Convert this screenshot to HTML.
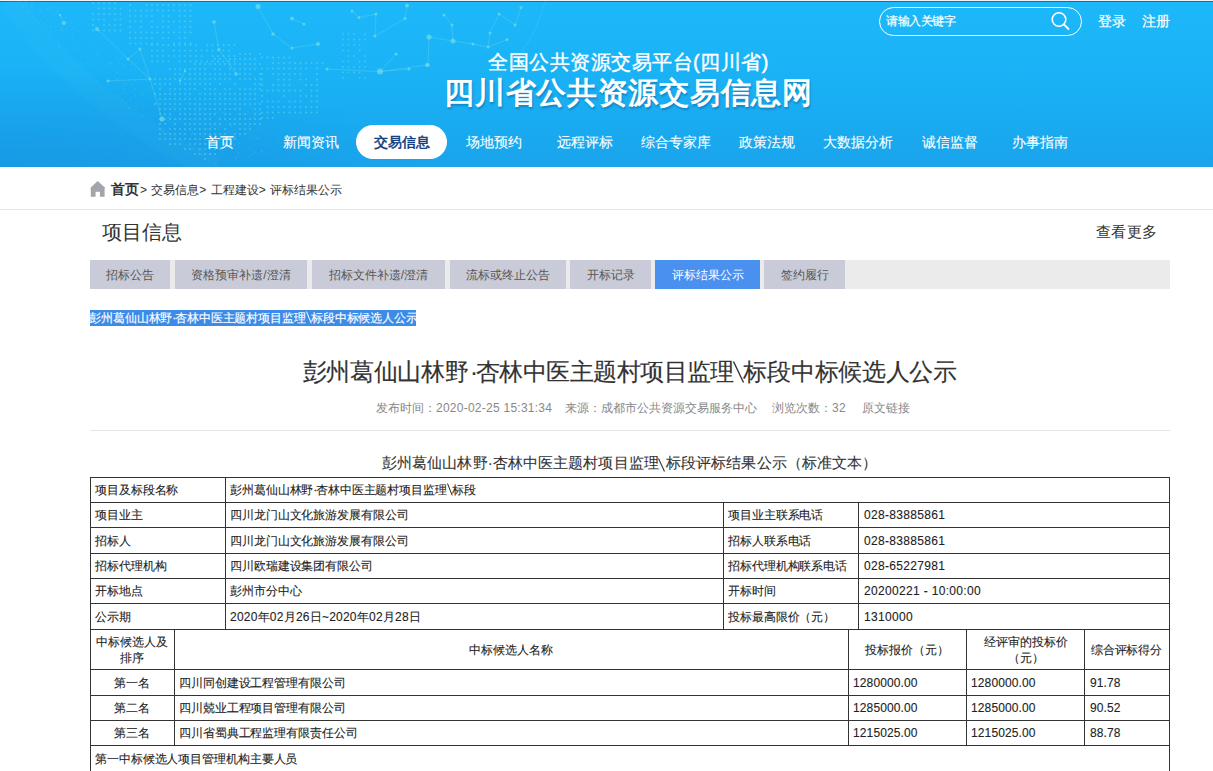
<!DOCTYPE html>
<html><head><meta charset="utf-8">
<style>
*{margin:0;padding:0;box-sizing:border-box}
html,body{width:1213px;height:771px;overflow:hidden;background:#fff;font-family:"Liberation Sans",sans-serif;color:#333}
.hd{position:absolute;left:0;top:0;width:1213px;height:167px;background:linear-gradient(180deg,#1db8fa 0%,#1ab3f6 40%,#19a4ec 100%);border-top:1px solid #eef2f6;overflow:hidden}
.hd:before{content:"";position:absolute;left:0;top:0;right:0;height:1px;background:#5a5a5a}
.abs{position:absolute;white-space:nowrap}
.search{left:879px;top:6px;width:203px;height:29px;border:1px solid #fff;border-radius:15px}
.search span{position:absolute;left:6px;top:5px;font-size:12px;color:#fff;letter-spacing:-0.5px;-webkit-text-stroke:0.2px #fff}
.t1{left:22px;width:1213px;text-align:center;top:49px;font-size:20px;letter-spacing:0.5px;color:#fff;line-height:24px;-webkit-text-stroke:0.4px #fff}
.t2{left:22px;width:1213px;text-align:center;top:74px;font-size:30px;letter-spacing:0.7px;font-weight:bold;color:#fff;line-height:36px;text-shadow:1px 2px 2px rgba(0,60,120,.35)}
.nav a{position:absolute;top:131.5px;font-size:14px;color:#fff;text-decoration:none;line-height:18px;-webkit-text-stroke:0.1px #fff}
.pill{left:356px;top:124px;width:91px;height:34px;background:#fff;border-radius:17px}
.bc{top:209px;left:0;width:1213px;height:1px;background:#e3e3e3}
.meta{top:400px;font-size:12px;color:#888;line-height:16px}
.dg{letter-spacing:0.25px}
.tabs{left:90px;top:260px;width:1080px;height:29px;background:#ebebeb}
.tab{position:absolute;top:0;height:29px;background:#c9ccd8;color:#555;font-size:12px;line-height:30px;text-align:center}
.tab.on{background:#4a90ef;color:#fff}
table{position:absolute;border-collapse:collapse;table-layout:fixed;font-size:12px;color:#333}
.ln{position:absolute;background:#333}
.md{letter-spacing:-1.4px}
.c.dg2{letter-spacing:0.33px}
.bs{display:inline-block;width:5px;height:1px;position:relative}
.bs svg{position:absolute;left:0;top:-10px}
.c{position:absolute;white-space:nowrap;font-size:12px;letter-spacing:-0.1px;color:#222;-webkit-text-stroke:0.1px #222}
.c2{position:absolute;text-align:center;font-size:12px;color:#222;-webkit-text-stroke:0.1px #222;line-height:16px}
</style></head><body>
<div class="hd">
<!--BG-->
<svg class="bgsvg" width="1213" height="167" viewBox="0 0 1213 167" style="position:absolute;left:0;top:0">
<defs><radialGradient id="dk" cx="0" cy="1" r="0.6"><stop offset="0" stop-color="#1592de" stop-opacity="0.55"/><stop offset="1" stop-color="#1592de" stop-opacity="0"/></radialGradient>
<radialGradient id="lt" cx="0.3" cy="0.2" r="0.5"><stop offset="0" stop-color="#40c8ff" stop-opacity="0.25"/><stop offset="1" stop-color="#40c8ff" stop-opacity="0"/></radialGradient></defs>

<rect x="0" y="0" width="700" height="167" fill="url(#dk)"/>
<path d="M10 0 Q 90 110 215 167" fill="none" stroke="#7fe0f0" stroke-opacity="0.05" stroke-width="22"/>
<path d="M545 0 Q 530 60 470 100" fill="none" stroke="#8fe6f2" stroke-opacity="0.15" stroke-width="1"/>
<g fill="#6edbe6"><circle cx="93.0" cy="2.0" r="1.0" fill-opacity="0.5"/>
<circle cx="98.5" cy="2.0" r="1.0" fill-opacity="0.5"/>
<circle cx="104.0" cy="2.0" r="1.0" fill-opacity="0.5"/>
<circle cx="109.5" cy="2.0" r="1.0" fill-opacity="0.5"/>
<circle cx="115.0" cy="2.0" r="1.0" fill-opacity="0.5"/>
<circle cx="98.5" cy="7.5" r="1.0" fill-opacity="0.5"/>
<circle cx="104.0" cy="7.5" r="1.0" fill-opacity="0.5"/>
<circle cx="109.5" cy="7.5" r="1.0" fill-opacity="0.5"/>
<circle cx="115.0" cy="7.5" r="1.0" fill-opacity="0.5"/>
<circle cx="120.5" cy="7.5" r="1.0" fill-opacity="0.5"/>
<circle cx="93.0" cy="13.0" r="1.0" fill-opacity="0.5"/>
<circle cx="98.5" cy="13.0" r="1.0" fill-opacity="0.5"/>
<circle cx="104.0" cy="13.0" r="1.0" fill-opacity="0.5"/>
<circle cx="109.5" cy="13.0" r="1.0" fill-opacity="0.5"/>
<circle cx="115.0" cy="13.0" r="1.0" fill-opacity="0.5"/>
<circle cx="120.5" cy="13.0" r="1.0" fill-opacity="0.5"/>
<circle cx="93.0" cy="18.5" r="1.0" fill-opacity="0.5"/>
<circle cx="98.5" cy="18.5" r="1.0" fill-opacity="0.5"/>
<circle cx="104.0" cy="18.5" r="1.0" fill-opacity="0.5"/>
<circle cx="115.0" cy="18.5" r="1.0" fill-opacity="0.5"/>
<circle cx="120.5" cy="18.5" r="1.0" fill-opacity="0.5"/>
<circle cx="93.0" cy="24.0" r="1.0" fill-opacity="0.5"/>
<circle cx="104.0" cy="24.0" r="1.0" fill-opacity="0.5"/>
<circle cx="109.5" cy="24.0" r="1.0" fill-opacity="0.5"/>
<circle cx="115.0" cy="24.0" r="1.0" fill-opacity="0.5"/>
<circle cx="120.5" cy="24.0" r="1.0" fill-opacity="0.5"/>
<circle cx="93.0" cy="29.5" r="1.0" fill-opacity="0.5"/>
<circle cx="98.5" cy="29.5" r="1.0" fill-opacity="0.5"/>
<circle cx="104.0" cy="29.5" r="1.0" fill-opacity="0.5"/>
<circle cx="109.5" cy="29.5" r="1.0" fill-opacity="0.5"/>
<circle cx="115.0" cy="29.5" r="1.0" fill-opacity="0.5"/>
<circle cx="120.5" cy="29.5" r="1.0" fill-opacity="0.5"/>
<circle cx="130.0" cy="4.0" r="1.0" fill-opacity="0.5"/>
<circle cx="146.5" cy="4.0" r="1.0" fill-opacity="0.5"/>
<circle cx="152.0" cy="4.0" r="1.0" fill-opacity="0.5"/>
<circle cx="157.5" cy="4.0" r="1.0" fill-opacity="0.5"/>
<circle cx="163.0" cy="4.0" r="1.0" fill-opacity="0.5"/>
<circle cx="168.5" cy="4.0" r="1.0" fill-opacity="0.5"/>
<circle cx="174.0" cy="4.0" r="1.0" fill-opacity="0.5"/>
<circle cx="179.5" cy="4.0" r="1.0" fill-opacity="0.5"/>
<circle cx="185.0" cy="4.0" r="1.0" fill-opacity="0.5"/>
<circle cx="190.5" cy="4.0" r="1.0" fill-opacity="0.5"/>
<circle cx="130.0" cy="9.5" r="1.0" fill-opacity="0.5"/>
<circle cx="135.5" cy="9.5" r="1.0" fill-opacity="0.5"/>
<circle cx="141.0" cy="9.5" r="1.0" fill-opacity="0.5"/>
<circle cx="146.5" cy="9.5" r="1.0" fill-opacity="0.5"/>
<circle cx="152.0" cy="9.5" r="1.0" fill-opacity="0.5"/>
<circle cx="157.5" cy="9.5" r="1.0" fill-opacity="0.5"/>
<circle cx="163.0" cy="9.5" r="1.0" fill-opacity="0.5"/>
<circle cx="168.5" cy="9.5" r="1.0" fill-opacity="0.5"/>
<circle cx="174.0" cy="9.5" r="1.0" fill-opacity="0.5"/>
<circle cx="179.5" cy="9.5" r="1.0" fill-opacity="0.5"/>
<circle cx="185.0" cy="9.5" r="1.0" fill-opacity="0.5"/>
<circle cx="190.5" cy="9.5" r="1.0" fill-opacity="0.5"/>
<circle cx="130.0" cy="15.0" r="1.0" fill-opacity="0.5"/>
<circle cx="135.5" cy="15.0" r="1.0" fill-opacity="0.5"/>
<circle cx="141.0" cy="15.0" r="1.0" fill-opacity="0.5"/>
<circle cx="146.5" cy="15.0" r="1.0" fill-opacity="0.5"/>
<circle cx="152.0" cy="15.0" r="1.0" fill-opacity="0.5"/>
<circle cx="163.0" cy="15.0" r="1.0" fill-opacity="0.5"/>
<circle cx="168.5" cy="15.0" r="1.0" fill-opacity="0.5"/>
<circle cx="179.5" cy="15.0" r="1.0" fill-opacity="0.5"/>
<circle cx="185.0" cy="15.0" r="1.0" fill-opacity="0.5"/>
<circle cx="190.5" cy="15.0" r="1.0" fill-opacity="0.5"/>
<circle cx="130.0" cy="20.5" r="1.0" fill-opacity="0.5"/>
<circle cx="135.5" cy="20.5" r="1.0" fill-opacity="0.5"/>
<circle cx="141.0" cy="20.5" r="1.0" fill-opacity="0.5"/>
<circle cx="152.0" cy="20.5" r="1.0" fill-opacity="0.5"/>
<circle cx="163.0" cy="20.5" r="1.0" fill-opacity="0.5"/>
<circle cx="168.5" cy="20.5" r="1.0" fill-opacity="0.5"/>
<circle cx="174.0" cy="20.5" r="1.0" fill-opacity="0.5"/>
<circle cx="179.5" cy="20.5" r="1.0" fill-opacity="0.5"/>
<circle cx="185.0" cy="20.5" r="1.0" fill-opacity="0.5"/>
<circle cx="190.5" cy="20.5" r="1.0" fill-opacity="0.5"/>
<circle cx="130.0" cy="26.0" r="1.0" fill-opacity="0.5"/>
<circle cx="141.0" cy="26.0" r="1.0" fill-opacity="0.5"/>
<circle cx="152.0" cy="26.0" r="1.0" fill-opacity="0.5"/>
<circle cx="157.5" cy="26.0" r="1.0" fill-opacity="0.5"/>
<circle cx="163.0" cy="26.0" r="1.0" fill-opacity="0.5"/>
<circle cx="168.5" cy="26.0" r="1.0" fill-opacity="0.5"/>
<circle cx="179.5" cy="26.0" r="1.0" fill-opacity="0.5"/>
<circle cx="185.0" cy="26.0" r="1.0" fill-opacity="0.5"/>
<circle cx="190.5" cy="26.0" r="1.0" fill-opacity="0.5"/>
<circle cx="130.0" cy="31.5" r="1.0" fill-opacity="0.5"/>
<circle cx="135.5" cy="31.5" r="1.0" fill-opacity="0.5"/>
<circle cx="141.0" cy="31.5" r="1.0" fill-opacity="0.5"/>
<circle cx="146.5" cy="31.5" r="1.0" fill-opacity="0.5"/>
<circle cx="152.0" cy="31.5" r="1.0" fill-opacity="0.5"/>
<circle cx="157.5" cy="31.5" r="1.0" fill-opacity="0.5"/>
<circle cx="163.0" cy="31.5" r="1.0" fill-opacity="0.5"/>
<circle cx="168.5" cy="31.5" r="1.0" fill-opacity="0.5"/>
<circle cx="174.0" cy="31.5" r="1.0" fill-opacity="0.5"/>
<circle cx="179.5" cy="31.5" r="1.0" fill-opacity="0.5"/>
<circle cx="185.0" cy="31.5" r="1.0" fill-opacity="0.5"/>
<circle cx="190.5" cy="31.5" r="1.0" fill-opacity="0.5"/>
<circle cx="130.0" cy="37.0" r="1.0" fill-opacity="0.5"/>
<circle cx="135.5" cy="37.0" r="1.0" fill-opacity="0.5"/>
<circle cx="141.0" cy="37.0" r="1.0" fill-opacity="0.5"/>
<circle cx="146.5" cy="37.0" r="1.0" fill-opacity="0.5"/>
<circle cx="152.0" cy="37.0" r="1.0" fill-opacity="0.5"/>
<circle cx="163.0" cy="37.0" r="1.0" fill-opacity="0.5"/>
<circle cx="168.5" cy="37.0" r="1.0" fill-opacity="0.5"/>
<circle cx="179.5" cy="37.0" r="1.0" fill-opacity="0.5"/>
<circle cx="185.0" cy="37.0" r="1.0" fill-opacity="0.5"/>
<circle cx="130.0" cy="42.5" r="1.0" fill-opacity="0.5"/>
<circle cx="135.5" cy="42.5" r="1.0" fill-opacity="0.5"/>
<circle cx="141.0" cy="42.5" r="1.0" fill-opacity="0.5"/>
<circle cx="146.5" cy="42.5" r="1.0" fill-opacity="0.5"/>
<circle cx="152.0" cy="42.5" r="1.0" fill-opacity="0.5"/>
<circle cx="157.5" cy="42.5" r="1.0" fill-opacity="0.5"/>
<circle cx="174.0" cy="42.5" r="1.0" fill-opacity="0.5"/>
<circle cx="179.5" cy="42.5" r="1.0" fill-opacity="0.5"/>
<circle cx="185.0" cy="42.5" r="1.0" fill-opacity="0.5"/>
<circle cx="190.5" cy="42.5" r="1.0" fill-opacity="0.5"/>
<circle cx="152.0" cy="44.0" r="1.0" fill-opacity="0.5"/>
<circle cx="157.5" cy="44.0" r="1.0" fill-opacity="0.5"/>
<circle cx="163.0" cy="44.0" r="1.0" fill-opacity="0.5"/>
<circle cx="168.5" cy="44.0" r="1.0" fill-opacity="0.5"/>
<circle cx="174.0" cy="44.0" r="1.0" fill-opacity="0.5"/>
<circle cx="179.5" cy="44.0" r="1.0" fill-opacity="0.5"/>
<circle cx="185.0" cy="44.0" r="1.0" fill-opacity="0.5"/>
<circle cx="190.5" cy="44.0" r="1.0" fill-opacity="0.5"/>
<circle cx="196.0" cy="44.0" r="1.0" fill-opacity="0.5"/>
<circle cx="207.0" cy="44.0" r="1.0" fill-opacity="0.5"/>
<circle cx="212.5" cy="44.0" r="1.0" fill-opacity="0.5"/>
<circle cx="218.0" cy="44.0" r="1.0" fill-opacity="0.5"/>
<circle cx="223.5" cy="44.0" r="1.0" fill-opacity="0.5"/>
<circle cx="229.0" cy="44.0" r="1.0" fill-opacity="0.5"/>
<circle cx="234.5" cy="44.0" r="1.0" fill-opacity="0.5"/>
<circle cx="152.0" cy="49.5" r="1.0" fill-opacity="0.5"/>
<circle cx="157.5" cy="49.5" r="1.0" fill-opacity="0.5"/>
<circle cx="163.0" cy="49.5" r="1.0" fill-opacity="0.5"/>
<circle cx="174.0" cy="49.5" r="1.0" fill-opacity="0.5"/>
<circle cx="179.5" cy="49.5" r="1.0" fill-opacity="0.5"/>
<circle cx="185.0" cy="49.5" r="1.0" fill-opacity="0.5"/>
<circle cx="190.5" cy="49.5" r="1.0" fill-opacity="0.5"/>
<circle cx="196.0" cy="49.5" r="1.0" fill-opacity="0.5"/>
<circle cx="201.5" cy="49.5" r="1.0" fill-opacity="0.5"/>
<circle cx="207.0" cy="49.5" r="1.0" fill-opacity="0.5"/>
<circle cx="212.5" cy="49.5" r="1.0" fill-opacity="0.5"/>
<circle cx="218.0" cy="49.5" r="1.0" fill-opacity="0.5"/>
<circle cx="223.5" cy="49.5" r="1.0" fill-opacity="0.5"/>
<circle cx="229.0" cy="49.5" r="1.0" fill-opacity="0.5"/>
<circle cx="152.0" cy="55.0" r="1.0" fill-opacity="0.5"/>
<circle cx="157.5" cy="55.0" r="1.0" fill-opacity="0.5"/>
<circle cx="163.0" cy="55.0" r="1.0" fill-opacity="0.5"/>
<circle cx="168.5" cy="55.0" r="1.0" fill-opacity="0.5"/>
<circle cx="174.0" cy="55.0" r="1.0" fill-opacity="0.5"/>
<circle cx="179.5" cy="55.0" r="1.0" fill-opacity="0.5"/>
<circle cx="185.0" cy="55.0" r="1.0" fill-opacity="0.5"/>
<circle cx="190.5" cy="55.0" r="1.0" fill-opacity="0.5"/>
<circle cx="196.0" cy="55.0" r="1.0" fill-opacity="0.5"/>
<circle cx="201.5" cy="55.0" r="1.0" fill-opacity="0.5"/>
<circle cx="212.5" cy="55.0" r="1.0" fill-opacity="0.5"/>
<circle cx="218.0" cy="55.0" r="1.0" fill-opacity="0.5"/>
<circle cx="223.5" cy="55.0" r="1.0" fill-opacity="0.5"/>
<circle cx="229.0" cy="55.0" r="1.0" fill-opacity="0.5"/>
<circle cx="234.5" cy="55.0" r="1.0" fill-opacity="0.5"/>
<circle cx="152.0" cy="60.5" r="1.0" fill-opacity="0.5"/>
<circle cx="157.5" cy="60.5" r="1.0" fill-opacity="0.5"/>
<circle cx="163.0" cy="60.5" r="1.0" fill-opacity="0.5"/>
<circle cx="168.5" cy="60.5" r="1.0" fill-opacity="0.5"/>
<circle cx="179.5" cy="60.5" r="1.0" fill-opacity="0.5"/>
<circle cx="185.0" cy="60.5" r="1.0" fill-opacity="0.5"/>
<circle cx="190.5" cy="60.5" r="1.0" fill-opacity="0.5"/>
<circle cx="196.0" cy="60.5" r="1.0" fill-opacity="0.5"/>
<circle cx="201.5" cy="60.5" r="1.0" fill-opacity="0.5"/>
<circle cx="207.0" cy="60.5" r="1.0" fill-opacity="0.5"/>
<circle cx="212.5" cy="60.5" r="1.0" fill-opacity="0.5"/>
<circle cx="218.0" cy="60.5" r="1.0" fill-opacity="0.5"/>
<circle cx="223.5" cy="60.5" r="1.0" fill-opacity="0.5"/>
<circle cx="229.0" cy="60.5" r="1.0" fill-opacity="0.5"/>
<circle cx="234.5" cy="60.5" r="1.0" fill-opacity="0.5"/>
<circle cx="240.0" cy="53.0" r="1.0" fill-opacity="0.5"/>
<circle cx="245.0" cy="53.0" r="1.0" fill-opacity="0.5"/>
<circle cx="250.0" cy="53.0" r="1.0" fill-opacity="0.5"/>
<circle cx="260.0" cy="53.0" r="1.0" fill-opacity="0.5"/>
<circle cx="215.0" cy="58.0" r="1.0" fill-opacity="0.5"/>
<circle cx="220.0" cy="58.0" r="1.0" fill-opacity="0.5"/>
<circle cx="230.0" cy="58.0" r="1.0" fill-opacity="0.5"/>
<circle cx="235.0" cy="58.0" r="1.0" fill-opacity="0.5"/>
<circle cx="240.0" cy="58.0" r="1.0" fill-opacity="0.5"/>
<circle cx="245.0" cy="58.0" r="1.0" fill-opacity="0.5"/>
<circle cx="250.0" cy="58.0" r="1.0" fill-opacity="0.5"/>
<circle cx="255.0" cy="58.0" r="1.0" fill-opacity="0.5"/>
<circle cx="195.0" cy="63.0" r="1.0" fill-opacity="0.5"/>
<circle cx="200.0" cy="63.0" r="1.0" fill-opacity="0.5"/>
<circle cx="205.0" cy="63.0" r="1.0" fill-opacity="0.5"/>
<circle cx="210.0" cy="63.0" r="1.0" fill-opacity="0.5"/>
<circle cx="215.0" cy="63.0" r="1.0" fill-opacity="0.5"/>
<circle cx="220.0" cy="63.0" r="1.0" fill-opacity="0.5"/>
<circle cx="225.0" cy="63.0" r="1.0" fill-opacity="0.5"/>
<circle cx="230.0" cy="63.0" r="1.0" fill-opacity="0.5"/>
<circle cx="235.0" cy="63.0" r="1.0" fill-opacity="0.5"/>
<circle cx="240.0" cy="63.0" r="1.0" fill-opacity="0.5"/>
<circle cx="245.0" cy="63.0" r="1.0" fill-opacity="0.5"/>
<circle cx="250.0" cy="63.0" r="1.0" fill-opacity="0.5"/>
<circle cx="255.0" cy="63.0" r="1.0" fill-opacity="0.5"/>
<circle cx="260.0" cy="63.0" r="1.0" fill-opacity="0.5"/>
<circle cx="170.0" cy="68.0" r="1.0" fill-opacity="0.5"/>
<circle cx="175.0" cy="68.0" r="1.0" fill-opacity="0.5"/>
<circle cx="180.0" cy="68.0" r="1.0" fill-opacity="0.5"/>
<circle cx="185.0" cy="68.0" r="1.0" fill-opacity="0.5"/>
<circle cx="190.0" cy="68.0" r="1.0" fill-opacity="0.5"/>
<circle cx="195.0" cy="68.0" r="1.0" fill-opacity="0.5"/>
<circle cx="200.0" cy="68.0" r="1.0" fill-opacity="0.5"/>
<circle cx="205.0" cy="68.0" r="1.0" fill-opacity="0.5"/>
<circle cx="215.0" cy="68.0" r="1.0" fill-opacity="0.5"/>
<circle cx="220.0" cy="68.0" r="1.0" fill-opacity="0.5"/>
<circle cx="230.0" cy="68.0" r="1.0" fill-opacity="0.5"/>
<circle cx="235.0" cy="68.0" r="1.0" fill-opacity="0.5"/>
<circle cx="240.0" cy="68.0" r="1.0" fill-opacity="0.5"/>
<circle cx="245.0" cy="68.0" r="1.0" fill-opacity="0.5"/>
<circle cx="250.0" cy="68.0" r="1.0" fill-opacity="0.5"/>
<circle cx="255.0" cy="68.0" r="1.0" fill-opacity="0.5"/>
<circle cx="175.0" cy="73.0" r="1.0" fill-opacity="0.5"/>
<circle cx="180.0" cy="73.0" r="1.0" fill-opacity="0.5"/>
<circle cx="190.0" cy="73.0" r="1.0" fill-opacity="0.5"/>
<circle cx="195.0" cy="73.0" r="1.0" fill-opacity="0.5"/>
<circle cx="200.0" cy="73.0" r="1.0" fill-opacity="0.5"/>
<circle cx="205.0" cy="73.0" r="1.0" fill-opacity="0.5"/>
<circle cx="210.0" cy="73.0" r="1.0" fill-opacity="0.5"/>
<circle cx="215.0" cy="73.0" r="1.0" fill-opacity="0.5"/>
<circle cx="220.0" cy="73.0" r="1.0" fill-opacity="0.5"/>
<circle cx="225.0" cy="73.0" r="1.0" fill-opacity="0.5"/>
<circle cx="230.0" cy="73.0" r="1.0" fill-opacity="0.5"/>
<circle cx="240.0" cy="73.0" r="1.0" fill-opacity="0.5"/>
<circle cx="245.0" cy="73.0" r="1.0" fill-opacity="0.5"/>
<circle cx="250.0" cy="73.0" r="1.0" fill-opacity="0.5"/>
<circle cx="260.0" cy="73.0" r="1.0" fill-opacity="0.5"/>
<circle cx="155.0" cy="78.0" r="1.0" fill-opacity="0.5"/>
<circle cx="160.0" cy="78.0" r="1.0" fill-opacity="0.5"/>
<circle cx="165.0" cy="78.0" r="1.0" fill-opacity="0.5"/>
<circle cx="170.0" cy="78.0" r="1.0" fill-opacity="0.5"/>
<circle cx="175.0" cy="78.0" r="1.0" fill-opacity="0.5"/>
<circle cx="180.0" cy="78.0" r="1.0" fill-opacity="0.5"/>
<circle cx="185.0" cy="78.0" r="1.0" fill-opacity="0.5"/>
<circle cx="190.0" cy="78.0" r="1.0" fill-opacity="0.5"/>
<circle cx="195.0" cy="78.0" r="1.0" fill-opacity="0.5"/>
<circle cx="200.0" cy="78.0" r="1.0" fill-opacity="0.5"/>
<circle cx="205.0" cy="78.0" r="1.0" fill-opacity="0.5"/>
<circle cx="210.0" cy="78.0" r="1.0" fill-opacity="0.5"/>
<circle cx="215.0" cy="78.0" r="1.0" fill-opacity="0.5"/>
<circle cx="220.0" cy="78.0" r="1.0" fill-opacity="0.5"/>
<circle cx="225.0" cy="78.0" r="1.0" fill-opacity="0.5"/>
<circle cx="230.0" cy="78.0" r="1.0" fill-opacity="0.5"/>
<circle cx="240.0" cy="78.0" r="1.0" fill-opacity="0.5"/>
<circle cx="245.0" cy="78.0" r="1.0" fill-opacity="0.5"/>
<circle cx="250.0" cy="78.0" r="1.0" fill-opacity="0.5"/>
<circle cx="255.0" cy="78.0" r="1.0" fill-opacity="0.5"/>
<circle cx="260.0" cy="78.0" r="1.0" fill-opacity="0.5"/>
<circle cx="155.0" cy="83.0" r="1.0" fill-opacity="0.5"/>
<circle cx="160.0" cy="83.0" r="1.0" fill-opacity="0.5"/>
<circle cx="165.0" cy="83.0" r="1.0" fill-opacity="0.5"/>
<circle cx="170.0" cy="83.0" r="1.0" fill-opacity="0.5"/>
<circle cx="180.0" cy="83.0" r="1.0" fill-opacity="0.5"/>
<circle cx="185.0" cy="83.0" r="1.0" fill-opacity="0.5"/>
<circle cx="190.0" cy="83.0" r="1.0" fill-opacity="0.5"/>
<circle cx="195.0" cy="83.0" r="1.0" fill-opacity="0.5"/>
<circle cx="200.0" cy="83.0" r="1.0" fill-opacity="0.5"/>
<circle cx="205.0" cy="83.0" r="1.0" fill-opacity="0.5"/>
<circle cx="210.0" cy="83.0" r="1.0" fill-opacity="0.5"/>
<circle cx="220.0" cy="83.0" r="1.0" fill-opacity="0.5"/>
<circle cx="235.0" cy="83.0" r="1.0" fill-opacity="0.5"/>
<circle cx="255.0" cy="83.0" r="1.0" fill-opacity="0.5"/>
<circle cx="260.0" cy="83.0" r="1.0" fill-opacity="0.5"/>
<circle cx="160.0" cy="88.0" r="1.0" fill-opacity="0.5"/>
<circle cx="170.0" cy="88.0" r="1.0" fill-opacity="0.5"/>
<circle cx="175.0" cy="88.0" r="1.0" fill-opacity="0.5"/>
<circle cx="180.0" cy="88.0" r="1.0" fill-opacity="0.5"/>
<circle cx="185.0" cy="88.0" r="1.0" fill-opacity="0.5"/>
<circle cx="190.0" cy="88.0" r="1.0" fill-opacity="0.5"/>
<circle cx="195.0" cy="88.0" r="1.0" fill-opacity="0.5"/>
<circle cx="205.0" cy="88.0" r="1.0" fill-opacity="0.5"/>
<circle cx="210.0" cy="88.0" r="1.0" fill-opacity="0.5"/>
<circle cx="215.0" cy="88.0" r="1.0" fill-opacity="0.5"/>
<circle cx="225.0" cy="88.0" r="1.0" fill-opacity="0.5"/>
<circle cx="230.0" cy="88.0" r="1.0" fill-opacity="0.5"/>
<circle cx="240.0" cy="88.0" r="1.0" fill-opacity="0.5"/>
<circle cx="245.0" cy="88.0" r="1.0" fill-opacity="0.5"/>
<circle cx="250.0" cy="88.0" r="1.0" fill-opacity="0.5"/>
<circle cx="255.0" cy="88.0" r="1.0" fill-opacity="0.5"/>
<circle cx="260.0" cy="88.0" r="1.0" fill-opacity="0.5"/>
<circle cx="155.0" cy="93.0" r="1.0" fill-opacity="0.5"/>
<circle cx="160.0" cy="93.0" r="1.0" fill-opacity="0.5"/>
<circle cx="165.0" cy="93.0" r="1.0" fill-opacity="0.5"/>
<circle cx="170.0" cy="93.0" r="1.0" fill-opacity="0.5"/>
<circle cx="175.0" cy="93.0" r="1.0" fill-opacity="0.5"/>
<circle cx="180.0" cy="93.0" r="1.0" fill-opacity="0.5"/>
<circle cx="185.0" cy="93.0" r="1.0" fill-opacity="0.5"/>
<circle cx="190.0" cy="93.0" r="1.0" fill-opacity="0.5"/>
<circle cx="200.0" cy="93.0" r="1.0" fill-opacity="0.5"/>
<circle cx="205.0" cy="93.0" r="1.0" fill-opacity="0.5"/>
<circle cx="210.0" cy="93.0" r="1.0" fill-opacity="0.5"/>
<circle cx="215.0" cy="93.0" r="1.0" fill-opacity="0.5"/>
<circle cx="220.0" cy="93.0" r="1.0" fill-opacity="0.5"/>
<circle cx="225.0" cy="93.0" r="1.0" fill-opacity="0.5"/>
<circle cx="230.0" cy="93.0" r="1.0" fill-opacity="0.5"/>
<circle cx="235.0" cy="93.0" r="1.0" fill-opacity="0.5"/>
<circle cx="240.0" cy="93.0" r="1.0" fill-opacity="0.5"/>
<circle cx="245.0" cy="93.0" r="1.0" fill-opacity="0.5"/>
<circle cx="250.0" cy="93.0" r="1.0" fill-opacity="0.5"/>
<circle cx="255.0" cy="93.0" r="1.0" fill-opacity="0.5"/>
<circle cx="160.0" cy="98.0" r="1.0" fill-opacity="0.5"/>
<circle cx="165.0" cy="98.0" r="1.0" fill-opacity="0.5"/>
<circle cx="170.0" cy="98.0" r="1.0" fill-opacity="0.5"/>
<circle cx="175.0" cy="98.0" r="1.0" fill-opacity="0.5"/>
<circle cx="180.0" cy="98.0" r="1.0" fill-opacity="0.5"/>
<circle cx="185.0" cy="98.0" r="1.0" fill-opacity="0.5"/>
<circle cx="190.0" cy="98.0" r="1.0" fill-opacity="0.5"/>
<circle cx="195.0" cy="98.0" r="1.0" fill-opacity="0.5"/>
<circle cx="200.0" cy="98.0" r="1.0" fill-opacity="0.5"/>
<circle cx="205.0" cy="98.0" r="1.0" fill-opacity="0.5"/>
<circle cx="210.0" cy="98.0" r="1.0" fill-opacity="0.5"/>
<circle cx="215.0" cy="98.0" r="1.0" fill-opacity="0.5"/>
<circle cx="220.0" cy="98.0" r="1.0" fill-opacity="0.5"/>
<circle cx="225.0" cy="98.0" r="1.0" fill-opacity="0.5"/>
<circle cx="230.0" cy="98.0" r="1.0" fill-opacity="0.5"/>
<circle cx="235.0" cy="98.0" r="1.0" fill-opacity="0.5"/>
<circle cx="240.0" cy="98.0" r="1.0" fill-opacity="0.5"/>
<circle cx="245.0" cy="98.0" r="1.0" fill-opacity="0.5"/>
<circle cx="250.0" cy="98.0" r="1.0" fill-opacity="0.5"/>
<circle cx="255.0" cy="98.0" r="1.0" fill-opacity="0.5"/>
<circle cx="155.0" cy="103.0" r="1.0" fill-opacity="0.5"/>
<circle cx="160.0" cy="103.0" r="1.0" fill-opacity="0.5"/>
<circle cx="165.0" cy="103.0" r="1.0" fill-opacity="0.5"/>
<circle cx="170.0" cy="103.0" r="1.0" fill-opacity="0.5"/>
<circle cx="175.0" cy="103.0" r="1.0" fill-opacity="0.5"/>
<circle cx="180.0" cy="103.0" r="1.0" fill-opacity="0.5"/>
<circle cx="190.0" cy="103.0" r="1.0" fill-opacity="0.5"/>
<circle cx="195.0" cy="103.0" r="1.0" fill-opacity="0.5"/>
<circle cx="200.0" cy="103.0" r="1.0" fill-opacity="0.5"/>
<circle cx="205.0" cy="103.0" r="1.0" fill-opacity="0.5"/>
<circle cx="210.0" cy="103.0" r="1.0" fill-opacity="0.5"/>
<circle cx="215.0" cy="103.0" r="1.0" fill-opacity="0.5"/>
<circle cx="220.0" cy="103.0" r="1.0" fill-opacity="0.5"/>
<circle cx="225.0" cy="103.0" r="1.0" fill-opacity="0.5"/>
<circle cx="230.0" cy="103.0" r="1.0" fill-opacity="0.5"/>
<circle cx="235.0" cy="103.0" r="1.0" fill-opacity="0.5"/>
<circle cx="240.0" cy="103.0" r="1.0" fill-opacity="0.5"/>
<circle cx="245.0" cy="103.0" r="1.0" fill-opacity="0.5"/>
<circle cx="250.0" cy="103.0" r="1.0" fill-opacity="0.5"/>
<circle cx="255.0" cy="103.0" r="1.0" fill-opacity="0.5"/>
<circle cx="260.0" cy="103.0" r="1.0" fill-opacity="0.5"/>
<circle cx="160.0" cy="108.0" r="1.0" fill-opacity="0.5"/>
<circle cx="165.0" cy="108.0" r="1.0" fill-opacity="0.5"/>
<circle cx="170.0" cy="108.0" r="1.0" fill-opacity="0.5"/>
<circle cx="175.0" cy="108.0" r="1.0" fill-opacity="0.5"/>
<circle cx="180.0" cy="108.0" r="1.0" fill-opacity="0.5"/>
<circle cx="185.0" cy="108.0" r="1.0" fill-opacity="0.5"/>
<circle cx="190.0" cy="108.0" r="1.0" fill-opacity="0.5"/>
<circle cx="195.0" cy="108.0" r="1.0" fill-opacity="0.5"/>
<circle cx="200.0" cy="108.0" r="1.0" fill-opacity="0.5"/>
<circle cx="205.0" cy="108.0" r="1.0" fill-opacity="0.5"/>
<circle cx="210.0" cy="108.0" r="1.0" fill-opacity="0.5"/>
<circle cx="215.0" cy="108.0" r="1.0" fill-opacity="0.5"/>
<circle cx="220.0" cy="108.0" r="1.0" fill-opacity="0.5"/>
<circle cx="225.0" cy="108.0" r="1.0" fill-opacity="0.5"/>
<circle cx="230.0" cy="108.0" r="1.0" fill-opacity="0.5"/>
<circle cx="235.0" cy="108.0" r="1.0" fill-opacity="0.5"/>
<circle cx="240.0" cy="108.0" r="1.0" fill-opacity="0.5"/>
<circle cx="255.0" cy="108.0" r="1.0" fill-opacity="0.5"/>
<circle cx="260.0" cy="108.0" r="1.0" fill-opacity="0.5"/>
<circle cx="160.0" cy="113.0" r="1.0" fill-opacity="0.5"/>
<circle cx="165.0" cy="113.0" r="1.0" fill-opacity="0.5"/>
<circle cx="170.0" cy="113.0" r="1.0" fill-opacity="0.5"/>
<circle cx="180.0" cy="113.0" r="1.0" fill-opacity="0.5"/>
<circle cx="185.0" cy="113.0" r="1.0" fill-opacity="0.5"/>
<circle cx="190.0" cy="113.0" r="1.0" fill-opacity="0.5"/>
<circle cx="195.0" cy="113.0" r="1.0" fill-opacity="0.5"/>
<circle cx="200.0" cy="113.0" r="1.0" fill-opacity="0.5"/>
<circle cx="205.0" cy="113.0" r="1.0" fill-opacity="0.5"/>
<circle cx="210.0" cy="113.0" r="1.0" fill-opacity="0.5"/>
<circle cx="215.0" cy="113.0" r="1.0" fill-opacity="0.5"/>
<circle cx="225.0" cy="113.0" r="1.0" fill-opacity="0.5"/>
<circle cx="230.0" cy="113.0" r="1.0" fill-opacity="0.5"/>
<circle cx="240.0" cy="113.0" r="1.0" fill-opacity="0.5"/>
<circle cx="245.0" cy="113.0" r="1.0" fill-opacity="0.5"/>
<circle cx="255.0" cy="113.0" r="1.0" fill-opacity="0.5"/>
<circle cx="260.0" cy="113.0" r="1.0" fill-opacity="0.5"/>
<circle cx="160.0" cy="118.0" r="1.0" fill-opacity="0.5"/>
<circle cx="165.0" cy="118.0" r="1.0" fill-opacity="0.5"/>
<circle cx="170.0" cy="118.0" r="1.0" fill-opacity="0.5"/>
<circle cx="175.0" cy="118.0" r="1.0" fill-opacity="0.5"/>
<circle cx="180.0" cy="118.0" r="1.0" fill-opacity="0.5"/>
<circle cx="185.0" cy="118.0" r="1.0" fill-opacity="0.5"/>
<circle cx="190.0" cy="118.0" r="1.0" fill-opacity="0.5"/>
<circle cx="195.0" cy="118.0" r="1.0" fill-opacity="0.5"/>
<circle cx="200.0" cy="118.0" r="1.0" fill-opacity="0.5"/>
<circle cx="205.0" cy="118.0" r="1.0" fill-opacity="0.5"/>
<circle cx="210.0" cy="118.0" r="1.0" fill-opacity="0.5"/>
<circle cx="220.0" cy="118.0" r="1.0" fill-opacity="0.5"/>
<circle cx="225.0" cy="118.0" r="1.0" fill-opacity="0.5"/>
<circle cx="230.0" cy="118.0" r="1.0" fill-opacity="0.5"/>
<circle cx="235.0" cy="118.0" r="1.0" fill-opacity="0.5"/>
<circle cx="240.0" cy="118.0" r="1.0" fill-opacity="0.5"/>
<circle cx="245.0" cy="118.0" r="1.0" fill-opacity="0.5"/>
<circle cx="250.0" cy="118.0" r="1.0" fill-opacity="0.5"/>
<circle cx="255.0" cy="118.0" r="1.0" fill-opacity="0.5"/>
<circle cx="260.0" cy="118.0" r="1.0" fill-opacity="0.5"/>
<circle cx="160.0" cy="123.0" r="1.0" fill-opacity="0.5"/>
<circle cx="165.0" cy="123.0" r="1.0" fill-opacity="0.5"/>
<circle cx="175.0" cy="123.0" r="1.0" fill-opacity="0.5"/>
<circle cx="185.0" cy="123.0" r="1.0" fill-opacity="0.5"/>
<circle cx="190.0" cy="123.0" r="1.0" fill-opacity="0.5"/>
<circle cx="195.0" cy="123.0" r="1.0" fill-opacity="0.5"/>
<circle cx="200.0" cy="123.0" r="1.0" fill-opacity="0.5"/>
<circle cx="205.0" cy="123.0" r="1.0" fill-opacity="0.5"/>
<circle cx="210.0" cy="123.0" r="1.0" fill-opacity="0.5"/>
<circle cx="215.0" cy="123.0" r="1.0" fill-opacity="0.5"/>
<circle cx="220.0" cy="123.0" r="1.0" fill-opacity="0.5"/>
<circle cx="230.0" cy="123.0" r="1.0" fill-opacity="0.5"/>
<circle cx="235.0" cy="123.0" r="1.0" fill-opacity="0.5"/>
<circle cx="240.0" cy="123.0" r="1.0" fill-opacity="0.5"/>
<circle cx="245.0" cy="123.0" r="1.0" fill-opacity="0.5"/>
<circle cx="250.0" cy="123.0" r="1.0" fill-opacity="0.5"/>
<circle cx="255.0" cy="123.0" r="1.0" fill-opacity="0.5"/>
<circle cx="260.0" cy="123.0" r="1.0" fill-opacity="0.5"/>
<circle cx="160.0" cy="128.0" r="1.0" fill-opacity="0.5"/>
<circle cx="170.0" cy="128.0" r="1.0" fill-opacity="0.5"/>
<circle cx="175.0" cy="128.0" r="1.0" fill-opacity="0.5"/>
<circle cx="180.0" cy="128.0" r="1.0" fill-opacity="0.5"/>
<circle cx="185.0" cy="128.0" r="1.0" fill-opacity="0.5"/>
<circle cx="190.0" cy="128.0" r="1.0" fill-opacity="0.5"/>
<circle cx="195.0" cy="128.0" r="1.0" fill-opacity="0.5"/>
<circle cx="200.0" cy="128.0" r="1.0" fill-opacity="0.5"/>
<circle cx="205.0" cy="128.0" r="1.0" fill-opacity="0.5"/>
<circle cx="210.0" cy="128.0" r="1.0" fill-opacity="0.5"/>
<circle cx="215.0" cy="128.0" r="1.0" fill-opacity="0.5"/>
<circle cx="225.0" cy="128.0" r="1.0" fill-opacity="0.5"/>
<circle cx="240.0" cy="128.0" r="1.0" fill-opacity="0.5"/>
<circle cx="245.0" cy="128.0" r="1.0" fill-opacity="0.5"/>
<circle cx="250.0" cy="128.0" r="1.0" fill-opacity="0.5"/>
<circle cx="160.0" cy="133.0" r="1.0" fill-opacity="0.5"/>
<circle cx="165.0" cy="133.0" r="1.0" fill-opacity="0.5"/>
<circle cx="170.0" cy="133.0" r="1.0" fill-opacity="0.5"/>
<circle cx="175.0" cy="133.0" r="1.0" fill-opacity="0.5"/>
<circle cx="180.0" cy="133.0" r="1.0" fill-opacity="0.5"/>
<circle cx="185.0" cy="133.0" r="1.0" fill-opacity="0.5"/>
<circle cx="195.0" cy="133.0" r="1.0" fill-opacity="0.5"/>
<circle cx="200.0" cy="133.0" r="1.0" fill-opacity="0.5"/>
<circle cx="205.0" cy="133.0" r="1.0" fill-opacity="0.5"/>
<circle cx="210.0" cy="133.0" r="1.0" fill-opacity="0.5"/>
<circle cx="215.0" cy="133.0" r="1.0" fill-opacity="0.5"/>
<circle cx="220.0" cy="133.0" r="1.0" fill-opacity="0.5"/>
<circle cx="225.0" cy="133.0" r="1.0" fill-opacity="0.5"/>
<circle cx="235.0" cy="133.0" r="1.0" fill-opacity="0.5"/>
<circle cx="240.0" cy="133.0" r="1.0" fill-opacity="0.5"/>
<circle cx="245.0" cy="133.0" r="1.0" fill-opacity="0.5"/>
<circle cx="160.0" cy="138.0" r="1.0" fill-opacity="0.5"/>
<circle cx="165.0" cy="138.0" r="1.0" fill-opacity="0.5"/>
<circle cx="170.0" cy="138.0" r="1.0" fill-opacity="0.5"/>
<circle cx="175.0" cy="138.0" r="1.0" fill-opacity="0.5"/>
<circle cx="180.0" cy="138.0" r="1.0" fill-opacity="0.5"/>
<circle cx="185.0" cy="138.0" r="1.0" fill-opacity="0.5"/>
<circle cx="190.0" cy="138.0" r="1.0" fill-opacity="0.5"/>
<circle cx="195.0" cy="138.0" r="1.0" fill-opacity="0.5"/>
<circle cx="200.0" cy="138.0" r="1.0" fill-opacity="0.5"/>
<circle cx="205.0" cy="138.0" r="1.0" fill-opacity="0.5"/>
<circle cx="210.0" cy="138.0" r="1.0" fill-opacity="0.5"/>
<circle cx="220.0" cy="138.0" r="1.0" fill-opacity="0.5"/>
<circle cx="225.0" cy="138.0" r="1.0" fill-opacity="0.5"/>
<circle cx="230.0" cy="138.0" r="1.0" fill-opacity="0.5"/>
<circle cx="235.0" cy="138.0" r="1.0" fill-opacity="0.5"/>
<circle cx="170.0" cy="143.0" r="1.0" fill-opacity="0.5"/>
<circle cx="175.0" cy="143.0" r="1.0" fill-opacity="0.5"/>
<circle cx="180.0" cy="143.0" r="1.0" fill-opacity="0.5"/>
<circle cx="190.0" cy="143.0" r="1.0" fill-opacity="0.5"/>
<circle cx="195.0" cy="143.0" r="1.0" fill-opacity="0.5"/>
<circle cx="200.0" cy="143.0" r="1.0" fill-opacity="0.5"/>
<circle cx="205.0" cy="143.0" r="1.0" fill-opacity="0.5"/>
<circle cx="210.0" cy="143.0" r="1.0" fill-opacity="0.5"/>
<circle cx="215.0" cy="143.0" r="1.0" fill-opacity="0.5"/>
<circle cx="225.0" cy="143.0" r="1.0" fill-opacity="0.5"/>
<circle cx="230.0" cy="143.0" r="1.0" fill-opacity="0.5"/>
<circle cx="185.0" cy="148.0" r="1.0" fill-opacity="0.5"/>
<circle cx="190.0" cy="148.0" r="1.0" fill-opacity="0.5"/>
<circle cx="200.0" cy="148.0" r="1.0" fill-opacity="0.5"/>
<circle cx="205.0" cy="148.0" r="1.0" fill-opacity="0.5"/>
<circle cx="210.0" cy="148.0" r="1.0" fill-opacity="0.5"/>
<circle cx="215.0" cy="148.0" r="1.0" fill-opacity="0.5"/>
<circle cx="220.0" cy="148.0" r="1.0" fill-opacity="0.5"/>
<circle cx="195.0" cy="153.0" r="1.0" fill-opacity="0.5"/>
<circle cx="200.0" cy="153.0" r="1.0" fill-opacity="0.5"/>
<circle cx="205.0" cy="153.0" r="1.0" fill-opacity="0.5"/>
<circle cx="210.0" cy="153.0" r="1.0" fill-opacity="0.5"/>
<circle cx="215.0" cy="153.0" r="1.0" fill-opacity="0.5"/>
<circle cx="205.0" cy="158.0" r="1.0" fill-opacity="0.5"/>
<circle cx="262.0" cy="56.5" r="1.0" fill-opacity="0.5"/>
<circle cx="267.5" cy="56.5" r="1.0" fill-opacity="0.5"/>
<circle cx="273.0" cy="56.5" r="1.0" fill-opacity="0.5"/>
<circle cx="278.5" cy="56.5" r="1.0" fill-opacity="0.5"/>
<circle cx="284.0" cy="56.5" r="1.0" fill-opacity="0.5"/>
<circle cx="289.5" cy="56.5" r="1.0" fill-opacity="0.5"/>
<circle cx="273.0" cy="62.0" r="1.0" fill-opacity="0.5"/>
<circle cx="278.5" cy="62.0" r="1.0" fill-opacity="0.5"/>
<circle cx="284.0" cy="62.0" r="1.0" fill-opacity="0.5"/>
<circle cx="289.5" cy="62.0" r="1.0" fill-opacity="0.5"/>
<circle cx="295.0" cy="62.0" r="1.0" fill-opacity="0.5"/>
<circle cx="300.5" cy="62.0" r="1.0" fill-opacity="0.5"/>
<circle cx="306.0" cy="62.0" r="1.0" fill-opacity="0.5"/>
<circle cx="311.5" cy="62.0" r="1.0" fill-opacity="0.5"/>
<circle cx="317.0" cy="62.0" r="1.0" fill-opacity="0.5"/>
<circle cx="322.5" cy="62.0" r="1.0" fill-opacity="0.5"/>
<circle cx="262.0" cy="67.5" r="1.0" fill-opacity="0.5"/>
<circle cx="267.5" cy="67.5" r="1.0" fill-opacity="0.5"/>
<circle cx="273.0" cy="67.5" r="1.0" fill-opacity="0.5"/>
<circle cx="278.5" cy="67.5" r="1.0" fill-opacity="0.5"/>
<circle cx="284.0" cy="67.5" r="1.0" fill-opacity="0.5"/>
<circle cx="289.5" cy="67.5" r="1.0" fill-opacity="0.5"/>
<circle cx="295.0" cy="67.5" r="1.0" fill-opacity="0.5"/>
<circle cx="300.5" cy="67.5" r="1.0" fill-opacity="0.5"/>
<circle cx="306.0" cy="67.5" r="1.0" fill-opacity="0.5"/>
<circle cx="317.0" cy="67.5" r="1.0" fill-opacity="0.5"/>
<circle cx="262.0" cy="73.0" r="1.0" fill-opacity="0.5"/>
<circle cx="273.0" cy="73.0" r="1.0" fill-opacity="0.5"/>
<circle cx="278.5" cy="73.0" r="1.0" fill-opacity="0.5"/>
<circle cx="284.0" cy="73.0" r="1.0" fill-opacity="0.5"/>
<circle cx="289.5" cy="73.0" r="1.0" fill-opacity="0.5"/>
<circle cx="295.0" cy="73.0" r="1.0" fill-opacity="0.5"/>
<circle cx="300.5" cy="73.0" r="1.0" fill-opacity="0.5"/>
<circle cx="317.0" cy="73.0" r="1.0" fill-opacity="0.5"/>
<circle cx="262.0" cy="78.5" r="1.0" fill-opacity="0.5"/>
<circle cx="278.5" cy="78.5" r="1.0" fill-opacity="0.5"/>
<circle cx="284.0" cy="78.5" r="1.0" fill-opacity="0.5"/>
<circle cx="289.5" cy="78.5" r="1.0" fill-opacity="0.5"/>
<circle cx="300.5" cy="78.5" r="1.0" fill-opacity="0.5"/>
<circle cx="306.0" cy="78.5" r="1.0" fill-opacity="0.5"/>
<circle cx="317.0" cy="78.5" r="1.0" fill-opacity="0.5"/>
<circle cx="262.0" cy="84.0" r="1.0" fill-opacity="0.5"/>
<circle cx="273.0" cy="84.0" r="1.0" fill-opacity="0.5"/>
<circle cx="278.5" cy="84.0" r="1.0" fill-opacity="0.5"/>
<circle cx="284.0" cy="84.0" r="1.0" fill-opacity="0.5"/>
<circle cx="289.5" cy="84.0" r="1.0" fill-opacity="0.5"/>
<circle cx="306.0" cy="84.0" r="1.0" fill-opacity="0.5"/>
<circle cx="311.5" cy="84.0" r="1.0" fill-opacity="0.5"/>
<circle cx="317.0" cy="84.0" r="1.0" fill-opacity="0.5"/>
<circle cx="262.0" cy="89.5" r="1.0" fill-opacity="0.5"/>
<circle cx="267.5" cy="89.5" r="1.0" fill-opacity="0.5"/>
<circle cx="273.0" cy="89.5" r="1.0" fill-opacity="0.5"/>
<circle cx="278.5" cy="89.5" r="1.0" fill-opacity="0.5"/>
<circle cx="284.0" cy="89.5" r="1.0" fill-opacity="0.5"/>
<circle cx="289.5" cy="89.5" r="1.0" fill-opacity="0.5"/>
<circle cx="295.0" cy="89.5" r="1.0" fill-opacity="0.5"/>
<circle cx="300.5" cy="89.5" r="1.0" fill-opacity="0.5"/>
<circle cx="311.5" cy="89.5" r="1.0" fill-opacity="0.5"/>
<circle cx="317.0" cy="89.5" r="1.0" fill-opacity="0.5"/>
<circle cx="262.0" cy="95.0" r="1.0" fill-opacity="0.5"/>
<circle cx="284.0" cy="95.0" r="1.0" fill-opacity="0.5"/>
<circle cx="300.5" cy="95.0" r="1.0" fill-opacity="0.5"/>
<circle cx="306.0" cy="95.0" r="1.0" fill-opacity="0.5"/>
<circle cx="311.5" cy="95.0" r="1.0" fill-opacity="0.5"/>
<circle cx="317.0" cy="95.0" r="1.0" fill-opacity="0.5"/>
<circle cx="262.0" cy="100.5" r="1.0" fill-opacity="0.5"/>
<circle cx="267.5" cy="100.5" r="1.0" fill-opacity="0.5"/>
<circle cx="273.0" cy="100.5" r="1.0" fill-opacity="0.5"/>
<circle cx="278.5" cy="100.5" r="1.0" fill-opacity="0.5"/>
<circle cx="289.5" cy="100.5" r="1.0" fill-opacity="0.5"/>
<circle cx="295.0" cy="100.5" r="1.0" fill-opacity="0.5"/>
<circle cx="300.5" cy="100.5" r="1.0" fill-opacity="0.5"/>
<circle cx="311.5" cy="100.5" r="1.0" fill-opacity="0.5"/>
<circle cx="317.0" cy="100.5" r="1.0" fill-opacity="0.5"/>
<circle cx="267.5" cy="106.0" r="1.0" fill-opacity="0.5"/>
<circle cx="273.0" cy="106.0" r="1.0" fill-opacity="0.5"/>
<circle cx="278.5" cy="106.0" r="1.0" fill-opacity="0.5"/>
<circle cx="284.0" cy="106.0" r="1.0" fill-opacity="0.5"/>
<circle cx="289.5" cy="106.0" r="1.0" fill-opacity="0.5"/>
<circle cx="295.0" cy="106.0" r="1.0" fill-opacity="0.5"/>
<circle cx="300.5" cy="106.0" r="1.0" fill-opacity="0.5"/>
<circle cx="306.0" cy="106.0" r="1.0" fill-opacity="0.5"/>
<circle cx="311.5" cy="106.0" r="1.0" fill-opacity="0.5"/>
<circle cx="317.0" cy="106.0" r="1.0" fill-opacity="0.5"/>
<circle cx="262.0" cy="111.5" r="1.0" fill-opacity="0.5"/>
<circle cx="267.5" cy="111.5" r="1.0" fill-opacity="0.5"/>
<circle cx="273.0" cy="111.5" r="1.0" fill-opacity="0.5"/>
<circle cx="278.5" cy="111.5" r="1.0" fill-opacity="0.5"/>
<circle cx="284.0" cy="111.5" r="1.0" fill-opacity="0.5"/>
<circle cx="289.5" cy="111.5" r="1.0" fill-opacity="0.5"/>
<circle cx="295.0" cy="111.5" r="1.0" fill-opacity="0.5"/>
<circle cx="300.5" cy="111.5" r="1.0" fill-opacity="0.5"/>
<circle cx="306.0" cy="111.5" r="1.0" fill-opacity="0.5"/>
<circle cx="311.5" cy="111.5" r="1.0" fill-opacity="0.5"/>
<circle cx="317.0" cy="111.5" r="1.0" fill-opacity="0.5"/>
<circle cx="262.0" cy="117.0" r="1.0" fill-opacity="0.5"/>
<circle cx="267.5" cy="117.0" r="1.0" fill-opacity="0.5"/>
<circle cx="273.0" cy="117.0" r="1.0" fill-opacity="0.5"/>
<circle cx="343.0" cy="33.0" r="1.0" fill-opacity="0.4"/>
<circle cx="348.5" cy="33.0" r="1.0" fill-opacity="0.4"/>
<circle cx="354.0" cy="33.0" r="1.0" fill-opacity="0.4"/>
<circle cx="365.0" cy="33.0" r="1.0" fill-opacity="0.4"/>
<circle cx="343.0" cy="38.5" r="1.0" fill-opacity="0.4"/>
<circle cx="348.5" cy="38.5" r="1.0" fill-opacity="0.4"/>
<circle cx="354.0" cy="38.5" r="1.0" fill-opacity="0.4"/>
<circle cx="359.5" cy="38.5" r="1.0" fill-opacity="0.4"/>
<circle cx="365.0" cy="38.5" r="1.0" fill-opacity="0.4"/>
<circle cx="343.0" cy="44.0" r="1.0" fill-opacity="0.4"/>
<circle cx="348.5" cy="44.0" r="1.0" fill-opacity="0.4"/>
<circle cx="354.0" cy="44.0" r="1.0" fill-opacity="0.4"/>
<circle cx="359.5" cy="44.0" r="1.0" fill-opacity="0.4"/>
<circle cx="343.0" cy="49.5" r="1.0" fill-opacity="0.4"/>
<circle cx="348.5" cy="49.5" r="1.0" fill-opacity="0.4"/>
<circle cx="359.5" cy="49.5" r="1.0" fill-opacity="0.4"/>
<circle cx="348.5" cy="55.0" r="1.0" fill-opacity="0.4"/>
<circle cx="354.0" cy="55.0" r="1.0" fill-opacity="0.4"/>
<circle cx="365.0" cy="55.0" r="1.0" fill-opacity="0.4"/>
<circle cx="343.0" cy="60.5" r="1.0" fill-opacity="0.4"/>
<circle cx="348.5" cy="60.5" r="1.0" fill-opacity="0.4"/>
<circle cx="359.5" cy="60.5" r="1.0" fill-opacity="0.4"/>
<circle cx="365.0" cy="60.5" r="1.0" fill-opacity="0.4"/>
<circle cx="343.0" cy="66.0" r="1.0" fill-opacity="0.4"/>
<circle cx="348.5" cy="66.0" r="1.0" fill-opacity="0.4"/>
<circle cx="354.0" cy="66.0" r="1.0" fill-opacity="0.4"/>
<circle cx="359.5" cy="66.0" r="1.0" fill-opacity="0.4"/>
<circle cx="365.0" cy="66.0" r="1.0" fill-opacity="0.4"/>
<circle cx="343.0" cy="71.5" r="1.0" fill-opacity="0.4"/>
<circle cx="348.5" cy="71.5" r="1.0" fill-opacity="0.4"/>
<circle cx="354.0" cy="71.5" r="1.0" fill-opacity="0.4"/>
<circle cx="359.5" cy="71.5" r="1.0" fill-opacity="0.4"/>
<circle cx="343.0" cy="77.0" r="1.0" fill-opacity="0.4"/>
<circle cx="359.5" cy="77.0" r="1.0" fill-opacity="0.4"/>
<circle cx="365.0" cy="77.0" r="1.0" fill-opacity="0.4"/>
<circle cx="193.5" cy="148.2" r="0.6" fill-opacity="0.3"/>
<circle cx="99.6" cy="74.6" r="0.6" fill-opacity="0.3"/>
<circle cx="211.4" cy="126.2" r="0.6" fill-opacity="0.3"/>
<circle cx="169.9" cy="93.6" r="0.6" fill-opacity="0.3"/>
<circle cx="205.2" cy="138.8" r="0.6" fill-opacity="0.3"/>
<circle cx="142.8" cy="93.3" r="0.6" fill-opacity="0.3"/>
<circle cx="53.2" cy="9.7" r="0.6" fill-opacity="0.3"/>
<circle cx="160.5" cy="85.3" r="0.6" fill-opacity="0.3"/>
<circle cx="60.2" cy="28.1" r="0.6" fill-opacity="0.3"/>
<circle cx="123.6" cy="66.4" r="0.6" fill-opacity="0.3"/>
<circle cx="32.7" cy="9.5" r="0.6" fill-opacity="0.3"/>
<circle cx="96.5" cy="80.2" r="0.6" fill-opacity="0.3"/>
<circle cx="145.7" cy="80.1" r="0.6" fill-opacity="0.3"/>
<circle cx="110.2" cy="61.1" r="0.6" fill-opacity="0.3"/>
<circle cx="130.9" cy="97.9" r="0.6" fill-opacity="0.3"/>
<circle cx="108.8" cy="44.7" r="0.6" fill-opacity="0.3"/>
<circle cx="81.4" cy="50.3" r="0.6" fill-opacity="0.3"/>
<circle cx="29.7" cy="11.9" r="0.6" fill-opacity="0.3"/>
<circle cx="66.3" cy="17.1" r="0.6" fill-opacity="0.3"/>
<circle cx="199.2" cy="104.6" r="0.6" fill-opacity="0.3"/>
<circle cx="255.2" cy="151.2" r="0.6" fill-opacity="0.3"/>
<circle cx="234.3" cy="144.2" r="0.6" fill-opacity="0.3"/>
<circle cx="123.0" cy="55.9" r="0.6" fill-opacity="0.3"/>
<circle cx="254.4" cy="130.3" r="0.6" fill-opacity="0.3"/>
<circle cx="130.6" cy="68.8" r="0.6" fill-opacity="0.3"/>
<circle cx="122.3" cy="53.3" r="0.6" fill-opacity="0.3"/>
<circle cx="214.5" cy="148.0" r="0.6" fill-opacity="0.3"/>
<circle cx="210.8" cy="152.7" r="0.6" fill-opacity="0.3"/>
<circle cx="47.1" cy="8.6" r="0.6" fill-opacity="0.3"/>
<circle cx="76.7" cy="42.5" r="0.6" fill-opacity="0.3"/>
<circle cx="129.1" cy="106.6" r="0.6" fill-opacity="0.3"/>
<circle cx="168.2" cy="119.6" r="0.6" fill-opacity="0.3"/>
<circle cx="98.3" cy="67.3" r="0.6" fill-opacity="0.3"/>
<circle cx="195.8" cy="109.6" r="0.6" fill-opacity="0.3"/>
<circle cx="58.7" cy="46.9" r="0.6" fill-opacity="0.3"/>
<circle cx="73.3" cy="44.7" r="0.6" fill-opacity="0.3"/>
<circle cx="26.9" cy="11.5" r="0.6" fill-opacity="0.3"/>
<circle cx="198.6" cy="113.8" r="0.6" fill-opacity="0.3"/>
<circle cx="278.4" cy="140.9" r="0.6" fill-opacity="0.3"/>
<circle cx="208.2" cy="138.9" r="0.6" fill-opacity="0.3"/>
<circle cx="44.4" cy="23.5" r="0.6" fill-opacity="0.3"/>
<circle cx="113.7" cy="69.4" r="0.6" fill-opacity="0.3"/>
<circle cx="123.7" cy="84.9" r="0.6" fill-opacity="0.3"/>
<circle cx="196.2" cy="137.0" r="0.6" fill-opacity="0.3"/>
<circle cx="131.0" cy="63.7" r="0.6" fill-opacity="0.3"/>
<circle cx="185.2" cy="129.3" r="0.6" fill-opacity="0.3"/>
<circle cx="77.3" cy="30.6" r="0.6" fill-opacity="0.3"/>
<circle cx="19.1" cy="0.5" r="0.6" fill-opacity="0.3"/>
<circle cx="130.1" cy="80.1" r="0.6" fill-opacity="0.3"/>
<circle cx="36.1" cy="27.3" r="0.6" fill-opacity="0.3"/>
<circle cx="68.2" cy="25.0" r="0.6" fill-opacity="0.3"/>
<circle cx="136.0" cy="62.6" r="0.6" fill-opacity="0.3"/>
<circle cx="222.2" cy="111.6" r="0.6" fill-opacity="0.3"/>
<circle cx="22.9" cy="4.1" r="0.6" fill-opacity="0.3"/>
<circle cx="27.7" cy="-1.8" r="0.6" fill-opacity="0.3"/>
<circle cx="66.0" cy="56.1" r="0.6" fill-opacity="0.3"/>
<circle cx="110.9" cy="90.1" r="0.6" fill-opacity="0.3"/>
<circle cx="69.1" cy="49.0" r="0.6" fill-opacity="0.3"/>
<circle cx="191.5" cy="126.0" r="0.6" fill-opacity="0.3"/>
<circle cx="51.5" cy="43.2" r="0.6" fill-opacity="0.3"/>
<circle cx="110.7" cy="62.5" r="0.6" fill-opacity="0.3"/>
<circle cx="187.4" cy="96.0" r="0.6" fill-opacity="0.3"/>
<circle cx="182.4" cy="130.6" r="0.6" fill-opacity="0.3"/>
<circle cx="55.0" cy="14.4" r="0.6" fill-opacity="0.3"/>
<circle cx="193.9" cy="122.0" r="0.6" fill-opacity="0.3"/>
<circle cx="207.8" cy="127.8" r="0.6" fill-opacity="0.3"/>
<circle cx="59.8" cy="44.7" r="0.6" fill-opacity="0.3"/>
<circle cx="33.9" cy="-3.1" r="0.6" fill-opacity="0.3"/>
<circle cx="249.7" cy="130.3" r="0.6" fill-opacity="0.3"/>
<circle cx="121.4" cy="67.9" r="0.6" fill-opacity="0.3"/>
<circle cx="252.6" cy="137.3" r="0.6" fill-opacity="0.3"/>
<circle cx="141.0" cy="93.8" r="0.6" fill-opacity="0.3"/>
<circle cx="108.7" cy="84.2" r="0.6" fill-opacity="0.3"/>
<circle cx="61.1" cy="22.7" r="0.6" fill-opacity="0.3"/>
<circle cx="252.1" cy="153.6" r="0.6" fill-opacity="0.3"/>
<circle cx="93.4" cy="63.2" r="0.6" fill-opacity="0.3"/>
<circle cx="124.9" cy="63.7" r="0.6" fill-opacity="0.3"/>
<circle cx="131.8" cy="60.9" r="0.6" fill-opacity="0.3"/>
<circle cx="43.5" cy="22.5" r="0.6" fill-opacity="0.3"/>
<circle cx="121.7" cy="80.8" r="0.6" fill-opacity="0.3"/>
<circle cx="231.2" cy="125.0" r="0.6" fill-opacity="0.3"/>
<circle cx="239.5" cy="142.4" r="0.6" fill-opacity="0.3"/>
<circle cx="33.5" cy="-0.3" r="0.6" fill-opacity="0.3"/>
<circle cx="132.1" cy="83.9" r="0.6" fill-opacity="0.3"/>
<circle cx="81.3" cy="37.7" r="0.6" fill-opacity="0.3"/>
<circle cx="199.3" cy="150.8" r="0.6" fill-opacity="0.3"/>
<circle cx="154.7" cy="105.3" r="0.6" fill-opacity="0.3"/>
<circle cx="144.3" cy="71.5" r="0.6" fill-opacity="0.3"/>
<circle cx="249.9" cy="146.3" r="0.6" fill-opacity="0.3"/>
<circle cx="71.8" cy="21.8" r="0.6" fill-opacity="0.3"/>
<circle cx="50.2" cy="25.9" r="0.6" fill-opacity="0.3"/>
<circle cx="191.8" cy="132.4" r="0.6" fill-opacity="0.3"/>
<circle cx="88.8" cy="33.1" r="0.6" fill-opacity="0.3"/>
<circle cx="222.6" cy="151.2" r="0.6" fill-opacity="0.3"/>
<circle cx="86.9" cy="61.7" r="0.6" fill-opacity="0.3"/>
<circle cx="37.5" cy="19.3" r="0.6" fill-opacity="0.3"/>
<circle cx="215.5" cy="162.8" r="0.6" fill-opacity="0.3"/>
<circle cx="52.0" cy="36.1" r="0.6" fill-opacity="0.3"/>
<circle cx="38.5" cy="8.0" r="0.6" fill-opacity="0.3"/>
<circle cx="201.6" cy="107.9" r="0.6" fill-opacity="0.3"/>
<circle cx="170.3" cy="90.9" r="0.6" fill-opacity="0.3"/>
<circle cx="22.9" cy="-1.7" r="0.6" fill-opacity="0.3"/>
<circle cx="209.8" cy="159.9" r="0.6" fill-opacity="0.3"/>
<circle cx="69.9" cy="38.7" r="0.6" fill-opacity="0.3"/>
<circle cx="72.4" cy="37.9" r="0.6" fill-opacity="0.3"/>
<circle cx="25.6" cy="5.6" r="0.6" fill-opacity="0.3"/>
<circle cx="214.1" cy="157.5" r="0.6" fill-opacity="0.3"/>
<circle cx="202.8" cy="148.1" r="0.6" fill-opacity="0.3"/>
<circle cx="261.5" cy="150.7" r="0.6" fill-opacity="0.3"/>
<circle cx="136.5" cy="106.0" r="0.6" fill-opacity="0.3"/>
<circle cx="41.9" cy="1.7" r="0.6" fill-opacity="0.3"/>
<circle cx="42.5" cy="27.4" r="0.6" fill-opacity="0.3"/>
<circle cx="226.2" cy="119.5" r="0.6" fill-opacity="0.3"/>
<circle cx="47.0" cy="-1.2" r="0.6" fill-opacity="0.3"/>
<circle cx="123.2" cy="83.3" r="0.6" fill-opacity="0.3"/>
<circle cx="38.4" cy="13.9" r="0.6" fill-opacity="0.3"/>
<circle cx="231.8" cy="159.2" r="0.6" fill-opacity="0.3"/>
<circle cx="34.1" cy="20.5" r="0.6" fill-opacity="0.3"/>
<circle cx="40.2" cy="17.5" r="0.6" fill-opacity="0.3"/>
<circle cx="198.4" cy="152.0" r="0.6" fill-opacity="0.3"/>
<circle cx="71.9" cy="21.1" r="0.6" fill-opacity="0.3"/>
<circle cx="284.6" cy="144.0" r="0.6" fill-opacity="0.3"/>
<circle cx="60.8" cy="36.8" r="0.6" fill-opacity="0.3"/>
<circle cx="236.2" cy="148.5" r="0.6" fill-opacity="0.3"/>
<circle cx="160.0" cy="112.0" r="0.6" fill-opacity="0.3"/>
<circle cx="26.0" cy="0.4" r="0.6" fill-opacity="0.3"/>
<circle cx="199.6" cy="109.9" r="0.6" fill-opacity="0.3"/>
<circle cx="135.5" cy="87.4" r="0.6" fill-opacity="0.3"/>
<circle cx="127.0" cy="82.9" r="0.6" fill-opacity="0.3"/>
<circle cx="146.1" cy="75.6" r="0.6" fill-opacity="0.3"/>
<circle cx="61.2" cy="26.5" r="0.6" fill-opacity="0.3"/>
<circle cx="256.2" cy="137.2" r="0.6" fill-opacity="0.3"/>
<circle cx="70.2" cy="18.9" r="0.6" fill-opacity="0.3"/>
<circle cx="185.3" cy="137.5" r="0.6" fill-opacity="0.3"/>
<circle cx="58.6" cy="42.0" r="0.6" fill-opacity="0.3"/>
<circle cx="48.2" cy="-0.7" r="0.6" fill-opacity="0.3"/>
<circle cx="117.2" cy="55.5" r="0.6" fill-opacity="0.3"/>
<circle cx="27.4" cy="19.1" r="0.6" fill-opacity="0.3"/>
<circle cx="234.3" cy="128.6" r="0.6" fill-opacity="0.3"/>
<circle cx="261.9" cy="150.2" r="0.6" fill-opacity="0.3"/>
<circle cx="140.4" cy="75.3" r="0.6" fill-opacity="0.3"/>
<circle cx="40.9" cy="9.9" r="0.6" fill-opacity="0.3"/>
<circle cx="90.9" cy="71.8" r="0.6" fill-opacity="0.3"/>
<circle cx="135.5" cy="95.0" r="0.6" fill-opacity="0.3"/>
<circle cx="116.2" cy="78.9" r="0.6" fill-opacity="0.3"/>
<circle cx="74.9" cy="48.5" r="0.6" fill-opacity="0.3"/>
<circle cx="171.2" cy="83.3" r="0.6" fill-opacity="0.3"/>
<circle cx="258.2" cy="137.4" r="0.6" fill-opacity="0.3"/>
<circle cx="191.8" cy="134.1" r="0.6" fill-opacity="0.3"/>
<circle cx="228.1" cy="157.7" r="0.6" fill-opacity="0.3"/>
<circle cx="44.4" cy="15.3" r="0.6" fill-opacity="0.3"/>
<circle cx="168.8" cy="116.2" r="0.6" fill-opacity="0.3"/>
<circle cx="144.0" cy="103.1" r="0.6" fill-opacity="0.3"/>
<circle cx="238.4" cy="151.8" r="0.6" fill-opacity="0.3"/>
<circle cx="117.4" cy="71.7" r="0.6" fill-opacity="0.3"/>
<circle cx="248.6" cy="125.2" r="0.6" fill-opacity="0.3"/>
<circle cx="124.7" cy="81.3" r="0.6" fill-opacity="0.3"/>
<circle cx="125.7" cy="102.5" r="0.6" fill-opacity="0.3"/>
<circle cx="120.0" cy="58.4" r="0.6" fill-opacity="0.3"/>
<circle cx="162.8" cy="129.4" r="0.6" fill-opacity="0.3"/>
<circle cx="203.2" cy="135.2" r="0.6" fill-opacity="0.3"/>
<circle cx="236.2" cy="156.2" r="0.6" fill-opacity="0.3"/>
<circle cx="62.2" cy="29.4" r="0.6" fill-opacity="0.3"/>
<circle cx="214.1" cy="138.9" r="0.6" fill-opacity="0.3"/>
<circle cx="228.2" cy="130.1" r="0.6" fill-opacity="0.3"/>
<circle cx="81.3" cy="56.4" r="0.6" fill-opacity="0.3"/>
<circle cx="117.2" cy="78.3" r="0.6" fill-opacity="0.3"/>
<circle cx="98.9" cy="53.1" r="0.6" fill-opacity="0.3"/>
<circle cx="222.0" cy="134.1" r="0.6" fill-opacity="0.3"/>
<circle cx="38.8" cy="22.1" r="0.6" fill-opacity="0.3"/>
<circle cx="96.9" cy="53.4" r="0.6" fill-opacity="0.3"/>
<circle cx="33.2" cy="22.5" r="0.6" fill-opacity="0.3"/>
<circle cx="72.3" cy="50.0" r="0.6" fill-opacity="0.3"/>
<circle cx="32.3" cy="-0.1" r="0.6" fill-opacity="0.3"/>
<circle cx="231.4" cy="142.6" r="0.6" fill-opacity="0.3"/>
<circle cx="199.5" cy="107.3" r="0.6" fill-opacity="0.3"/>
<circle cx="232.9" cy="121.0" r="0.6" fill-opacity="0.3"/>
<circle cx="116.1" cy="63.5" r="0.6" fill-opacity="0.3"/>
<circle cx="56.3" cy="10.8" r="0.6" fill-opacity="0.3"/>
<circle cx="92.4" cy="56.6" r="0.6" fill-opacity="0.3"/>
<circle cx="206.2" cy="143.2" r="0.6" fill-opacity="0.3"/>
<circle cx="67.4" cy="22.1" r="0.6" fill-opacity="0.3"/>
<circle cx="122.3" cy="99.1" r="0.6" fill-opacity="0.3"/>
<circle cx="26.8" cy="1.4" r="0.6" fill-opacity="0.3"/>
<circle cx="38.1" cy="-6.3" r="0.6" fill-opacity="0.3"/>
<circle cx="46.8" cy="27.6" r="0.6" fill-opacity="0.3"/>
<circle cx="96.3" cy="57.7" r="0.6" fill-opacity="0.3"/>
<circle cx="111.4" cy="62.9" r="0.6" fill-opacity="0.3"/>
<circle cx="156.2" cy="102.6" r="0.6" fill-opacity="0.3"/>
<circle cx="55.4" cy="6.1" r="0.6" fill-opacity="0.3"/>
<circle cx="143.6" cy="114.5" r="0.6" fill-opacity="0.3"/>
<circle cx="119.5" cy="62.4" r="0.6" fill-opacity="0.3"/>
<circle cx="217.6" cy="165.0" r="0.6" fill-opacity="0.3"/>
<circle cx="28.6" cy="-2.8" r="0.6" fill-opacity="0.3"/>
<circle cx="121.3" cy="57.2" r="0.6" fill-opacity="0.3"/>
<circle cx="192.4" cy="131.8" r="0.6" fill-opacity="0.3"/>
<circle cx="106.2" cy="61.4" r="0.6" fill-opacity="0.3"/>
<circle cx="198.9" cy="144.0" r="0.6" fill-opacity="0.3"/>
<circle cx="78.1" cy="64.5" r="0.6" fill-opacity="0.3"/>
<circle cx="128.7" cy="107.2" r="0.6" fill-opacity="0.3"/>
<circle cx="234.5" cy="145.0" r="0.6" fill-opacity="0.3"/>
<circle cx="116.7" cy="94.9" r="0.6" fill-opacity="0.3"/>
<circle cx="62.5" cy="33.2" r="0.6" fill-opacity="0.3"/>
<circle cx="214.1" cy="132.3" r="0.6" fill-opacity="0.3"/>
<circle cx="93.1" cy="34.8" r="0.6" fill-opacity="0.3"/>
<circle cx="161.9" cy="101.1" r="0.6" fill-opacity="0.3"/>
<circle cx="50.8" cy="30.4" r="0.6" fill-opacity="0.3"/>
<circle cx="198.3" cy="148.2" r="0.6" fill-opacity="0.3"/>
<circle cx="134.5" cy="78.8" r="0.6" fill-opacity="0.3"/>
<circle cx="100.0" cy="48.6" r="0.6" fill-opacity="0.3"/>
<circle cx="250.2" cy="133.5" r="0.6" fill-opacity="0.3"/>
<circle cx="162.0" cy="119.9" r="0.6" fill-opacity="0.3"/>
<circle cx="33.0" cy="5.8" r="0.6" fill-opacity="0.3"/>
<circle cx="67.0" cy="49.8" r="0.6" fill-opacity="0.3"/>
<circle cx="196.5" cy="141.6" r="0.6" fill-opacity="0.3"/>
<circle cx="230.2" cy="118.2" r="0.6" fill-opacity="0.3"/>
<circle cx="57.3" cy="10.3" r="0.6" fill-opacity="0.3"/>
<circle cx="84.7" cy="63.6" r="0.6" fill-opacity="0.3"/>
<circle cx="38.9" cy="30.9" r="0.6" fill-opacity="0.3"/>
<circle cx="115.0" cy="77.5" r="0.6" fill-opacity="0.3"/>
<circle cx="231.7" cy="124.9" r="0.6" fill-opacity="0.3"/>
<circle cx="31.7" cy="5.6" r="0.6" fill-opacity="0.3"/>
<circle cx="81.6" cy="62.7" r="0.6" fill-opacity="0.3"/>
<circle cx="58.2" cy="38.8" r="0.6" fill-opacity="0.3"/>
<circle cx="159.2" cy="110.0" r="0.6" fill-opacity="0.3"/>
<circle cx="33.6" cy="16.3" r="0.6" fill-opacity="0.3"/>
<circle cx="110.7" cy="65.5" r="0.6" fill-opacity="0.3"/>
<circle cx="73.8" cy="32.4" r="0.6" fill-opacity="0.3"/>
<circle cx="66.8" cy="28.0" r="0.6" fill-opacity="0.3"/>
<circle cx="129.6" cy="99.2" r="0.6" fill-opacity="0.3"/>
<circle cx="176.8" cy="118.2" r="0.6" fill-opacity="0.3"/>
<circle cx="135.3" cy="80.4" r="0.6" fill-opacity="0.3"/>
<circle cx="148.7" cy="97.4" r="0.6" fill-opacity="0.3"/>
<circle cx="42.9" cy="1.7" r="0.6" fill-opacity="0.3"/>
<circle cx="211.5" cy="133.7" r="0.6" fill-opacity="0.3"/>
<circle cx="127.5" cy="92.5" r="0.6" fill-opacity="0.3"/>
<circle cx="235.3" cy="135.6" r="0.6" fill-opacity="0.3"/>
<circle cx="73.5" cy="27.2" r="0.6" fill-opacity="0.3"/>
<circle cx="236.1" cy="157.4" r="0.6" fill-opacity="0.3"/>
<circle cx="248.5" cy="155.7" r="0.6" fill-opacity="0.3"/>
<circle cx="61.4" cy="21.7" r="0.6" fill-opacity="0.3"/>
<circle cx="94.9" cy="46.6" r="0.6" fill-opacity="0.3"/>
<circle cx="120.0" cy="96.1" r="0.6" fill-opacity="0.3"/>
<circle cx="145.4" cy="74.3" r="0.6" fill-opacity="0.3"/>
<circle cx="117.7" cy="71.6" r="0.6" fill-opacity="0.3"/>
<circle cx="209.6" cy="135.2" r="0.6" fill-opacity="0.3"/>
<circle cx="123.3" cy="73.2" r="0.6" fill-opacity="0.3"/>
<circle cx="183.5" cy="134.1" r="0.6" fill-opacity="0.3"/>
<circle cx="47.9" cy="7.8" r="0.6" fill-opacity="0.3"/>
<circle cx="123.2" cy="87.6" r="0.6" fill-opacity="0.3"/>
<circle cx="246.8" cy="130.1" r="0.6" fill-opacity="0.3"/>
<circle cx="155.9" cy="74.0" r="0.6" fill-opacity="0.3"/>
<circle cx="221.8" cy="124.3" r="0.6" fill-opacity="0.3"/>
<circle cx="55.7" cy="48.8" r="0.6" fill-opacity="0.3"/>
<circle cx="178.1" cy="99.9" r="0.6" fill-opacity="0.3"/>
<circle cx="86.7" cy="52.1" r="0.6" fill-opacity="0.3"/>
<circle cx="123.8" cy="90.9" r="0.6" fill-opacity="0.3"/>
<circle cx="173.1" cy="106.3" r="0.6" fill-opacity="0.3"/>
<circle cx="77.8" cy="63.1" r="0.6" fill-opacity="0.3"/>
<circle cx="124.4" cy="87.5" r="0.6" fill-opacity="0.3"/></g>
<g stroke="#70dde6" stroke-opacity="0.4" stroke-width="0.8"><line x1="258" y1="5.5" x2="273" y2="33"/><line x1="273" y1="33" x2="292" y2="47"/><line x1="292" y1="47" x2="318" y2="43"/><line x1="292" y1="17.6" x2="304" y2="23"/><line x1="352" y1="10" x2="359" y2="16.5"/><line x1="359" y1="16.5" x2="376" y2="13"/><line x1="376" y1="13" x2="375" y2="35"/><line x1="375" y1="35" x2="405" y2="17.6"/><line x1="405" y1="17.6" x2="407" y2="4.4"/><line x1="396" y1="53" x2="380" y2="70.6"/><line x1="327" y1="68" x2="380" y2="70.6"/><line x1="380" y1="70.6" x2="427" y2="64"/><line x1="380" y1="70.6" x2="409" y2="68"/><line x1="236" y1="73" x2="219" y2="48.5"/><line x1="219" y1="48.5" x2="214" y2="21"/><line x1="429" y1="36" x2="453" y2="40"/><line x1="453" y1="40" x2="452" y2="24"/><line x1="452" y1="24" x2="444" y2="14"/><line x1="453" y1="40" x2="473" y2="43"/><line x1="473" y1="43" x2="488" y2="46"/><line x1="488" y1="46" x2="490" y2="32"/><line x1="490" y1="32" x2="499" y2="13"/><line x1="499" y1="13" x2="515" y2="24"/><line x1="515" y1="24" x2="521" y2="6.6"/><line x1="488" y1="46" x2="507" y2="38.6"/><line x1="429" y1="36" x2="428" y2="64"/><line x1="128" y1="58" x2="140" y2="48"/><line x1="128" y1="58" x2="150" y2="78"/><line x1="140" y1="48" x2="150" y2="78"/><line x1="108" y1="80" x2="150" y2="78"/><line x1="150" y1="78" x2="162" y2="118"/><line x1="64" y1="22" x2="60" y2="14"/><line x1="97" y1="28" x2="128" y2="58"/><line x1="180" y1="80" x2="185" y2="70"/></g>
<g fill="#70dde6" fill-opacity="0.7"><circle cx="258" cy="5.5" r="2.5"/><circle cx="273" cy="33" r="1.8"/><circle cx="292" cy="47" r="1.5"/><circle cx="318" cy="43" r="2"/><circle cx="292" cy="17.6" r="2"/><circle cx="304" cy="23" r="1.5"/><circle cx="352" cy="10" r="1.5"/><circle cx="359" cy="16.5" r="1.5"/><circle cx="376" cy="13" r="1.5"/><circle cx="375" cy="35" r="1.5"/><circle cx="405" cy="17.6" r="1.5"/><circle cx="407" cy="4.4" r="2"/><circle cx="396" cy="53" r="1.5"/><circle cx="380" cy="70.6" r="3"/><circle cx="327" cy="68" r="1.5"/><circle cx="427" cy="64" r="2"/><circle cx="409" cy="68" r="1.5"/><circle cx="236" cy="73" r="1.8"/><circle cx="219" cy="48.5" r="1.5"/><circle cx="214" cy="21" r="1.8"/><circle cx="429" cy="36" r="2.5"/><circle cx="453" cy="40" r="2.5"/><circle cx="452" cy="24" r="1.5"/><circle cx="444" cy="14" r="1.5"/><circle cx="428" cy="64" r="1.8"/><circle cx="473" cy="43" r="1.5"/><circle cx="488" cy="46" r="1.5"/><circle cx="490" cy="32" r="1.5"/><circle cx="499" cy="13" r="1.5"/><circle cx="515" cy="24" r="1.5"/><circle cx="521" cy="6.6" r="1.5"/><circle cx="507" cy="38.6" r="1.5"/><circle cx="97" cy="28" r="2"/><circle cx="128" cy="58" r="1.5"/><circle cx="140" cy="48" r="1.5"/><circle cx="108" cy="80" r="1.5"/><circle cx="150" cy="78" r="1.5"/><circle cx="162" cy="118" r="2.5"/><circle cx="180" cy="80" r="1.2"/><circle cx="64" cy="22" r="2"/><circle cx="60" cy="14" r="1.2"/><circle cx="185" cy="70" r="1.2"/></g>
</svg>
<!--/BG-->
  <div class="abs search"><span>请输入关键字</span>
    <svg style="position:absolute;left:170px;top:2.5px" width="22" height="20" viewBox="0 0 22 20"><circle cx="9" cy="8.5" r="6.8" fill="none" stroke="#fff" stroke-width="1.6"/><line x1="14" y1="13.5" x2="18.5" y2="18" stroke="#fff" stroke-width="1.8" stroke-linecap="round"/></svg>
  </div>
  <div class="abs" style="left:1098px;top:11.5px;font-size:14px;color:#fff;-webkit-text-stroke:0.2px #fff">登录</div>
  <div class="abs" style="left:1142px;top:11.5px;font-size:14px;color:#fff;-webkit-text-stroke:0.2px #fff">注册</div>
  <div class="abs t1">全国公共资源交易平台(四川省)</div>
  <div class="abs t2">四川省公共资源交易信息网</div>
  <div class="abs pill"></div>
  <div class="nav">
    <a style="left:206px">首页</a>
    <a style="left:283px">新闻资讯</a>
    <a style="left:374px;color:#0d3b7c;-webkit-text-stroke:0.5px #0d3b7c">交易信息</a>
    <a style="left:466px">场地预约</a>
    <a style="left:557px">远程评标</a>
    <a style="left:641px">综合专家库</a>
    <a style="left:739px">政策法规</a>
    <a style="left:823px">大数据分析</a>
    <a style="left:922px">诚信监督</a>
    <a style="left:1012px">办事指南</a>
  </div>
</div>

<svg class="abs" style="left:90px;top:181px" width="16" height="16" viewBox="0 0 16 16"><path d="M7.7 0 L15.6 7.3 L14.6 7.3 L14.6 15.8 L9.9 15.8 L9.9 10.8 L5.6 10.8 L5.6 15.8 L0.8 15.8 L0.8 7.3 L0 7.3 Z" fill="#a2a5aa"/></svg>
<div class="abs" style="left:111px;top:181px;font-size:14px;font-weight:bold;color:#333;line-height:16px">首页</div>
<div class="abs" style="left:140px;top:182px;font-size:12px;word-spacing:1px;color:#333;line-height:16px">&gt; 交易信息&gt; 工程建设&gt; 评标结果公示</div>
<div class="abs bc"></div>

<div class="abs" style="left:102px;top:220px;font-size:20px;color:#333;line-height:24px">项目信息</div>
<div class="abs" style="left:1096px;top:223px;font-size:15px;letter-spacing:0.4px;color:#333;line-height:18px">查看更多</div>

<div class="abs tabs">
  <div class="tab" style="left:0;width:80px">招标公告</div>
  <div class="tab" style="left:85px;width:132px">资格预审补遗/澄清</div>
  <div class="tab" style="left:222px;width:133px">招标文件补遗/澄清</div>
  <div class="tab" style="left:360px;width:116px">流标或终止公告</div>
  <div class="tab" style="left:480px;width:81px">开标记录</div>
  <div class="tab on" style="left:565px;width:105px">评标结果公示</div>
  <div class="tab" style="left:674px;width:81px">签约履行</div>
</div>

<div class="abs" style="left:90px;top:310px;height:16px;width:326px;background:#3b8ce9;color:#fff;font-size:12px;line-height:16px;overflow:hidden;-webkit-text-stroke:0.15px #fff"><span style="margin-left:-1px;letter-spacing:-0.1px">彭州葛仙山林野<span class="md">·</span>杏林中医主题村项目监理<span class="bs"><svg width="6" height="13" viewBox="0 0 6 13"><line x1="0.5" y1="0.5" x2="5.2" y2="12.4" stroke="#fff" stroke-width="1"/></svg></span>标段中标候选人公示</span></div>

<div class="abs" style="left:302.5px;top:357px;font-size:24px;letter-spacing:-0.28px;color:#333;line-height:30px;-webkit-text-stroke:0.15px #333">彭州葛仙山林野<span style="display:inline-block;width:7px;margin-left:0.5px;text-indent:1px">·</span><span style="letter-spacing:-0.56px">杏林中医主题村项目监理</span><span id="bs1" style="display:inline-block;width:9.5px;height:1px;position:relative"><svg style="position:absolute;left:-1.5px;top:-18px" width="13" height="23" viewBox="0 0 13 23"><line x1="1.5" y1="0.5" x2="11.5" y2="21.5" stroke="#333" stroke-width="1.4"/></svg></span>标段中标候选人公示</div>
<div class="abs meta" style="left:376px">发布时间：<span class="dg">2020-02-25 15:31:34</span></div>
<div class="abs meta" style="left:565px">来源：成都市公共资源交易服务中心</div>
<div class="abs meta" style="left:772px">浏览次数：<span class="dg">32</span></div>
<div class="abs meta" style="left:862px">原文链接</div>
<div class="abs" style="left:90px;top:430px;width:1080px;height:1px;background:#e5e5e5"></div>

<div class="abs" style="left:382px;top:454px;font-size:15px;letter-spacing:0.1px;color:#333;line-height:18px;-webkit-text-stroke:0.1px #333">彭州葛仙山林野·杏林中医主题村项目监理<span id="bs2" style="display:inline-block;width:7px;height:1px;position:relative"><svg style="position:absolute;left:-0.6px;top:-9.5px" width="8" height="15" viewBox="0 0 8 15"><line x1="0.5" y1="0.5" x2="6.5" y2="13.5" stroke="#333" stroke-width="1.1"/></svg></span>标段评标结果公示（标准文本）</div>

<!--TABLE-->
<div class="ln" style="left:90px;top:477px;width:1080px;height:1px"></div>
<div class="ln" style="left:90px;top:502px;width:1080px;height:1px"></div>
<div class="ln" style="left:90px;top:527px;width:1080px;height:1px"></div>
<div class="ln" style="left:90px;top:553px;width:1080px;height:1px"></div>
<div class="ln" style="left:90px;top:578px;width:1080px;height:1px"></div>
<div class="ln" style="left:90px;top:603px;width:1080px;height:1px"></div>
<div class="ln" style="left:90px;top:629px;width:1080px;height:1px"></div>
<div class="ln" style="left:90px;top:669px;width:1080px;height:1px"></div>
<div class="ln" style="left:90px;top:695px;width:1080px;height:1px"></div>
<div class="ln" style="left:90px;top:720px;width:1080px;height:1px"></div>
<div class="ln" style="left:90px;top:745px;width:1080px;height:1px"></div>
<div class="ln" style="left:90px;top:477px;width:1px;height:295px"></div>
<div class="ln" style="left:1169px;top:477px;width:1px;height:295px"></div>
<div class="ln" style="left:225px;top:477px;width:1px;height:153px"></div>
<div class="ln" style="left:723px;top:502px;width:1px;height:128px"></div>
<div class="ln" style="left:858px;top:502px;width:1px;height:128px"></div>
<div class="ln" style="left:174px;top:629px;width:1px;height:117px"></div>
<div class="ln" style="left:848px;top:629px;width:1px;height:117px"></div>
<div class="ln" style="left:966px;top:629px;width:1px;height:117px"></div>
<div class="ln" style="left:1084px;top:629px;width:1px;height:117px"></div>
<div class="c" style="left:95px;top:478px;height:25px;line-height:25px">项目及标段名称</div>
<div class="c" style="left:230px;top:478px;height:25px;line-height:25px">彭州葛仙山林野<span class="md">·</span>杏林中医主题村项目监理<span class="bs"><svg width="6" height="13" viewBox="0 0 6 13"><line x1="0.5" y1="0.5" x2="5.2" y2="12.4" stroke="#222" stroke-width="1"/></svg></span>标段</div>
<div class="c" style="left:95px;top:503px;height:25px;line-height:25px">项目业主</div>
<div class="c" style="left:230px;top:503px;height:25px;line-height:25px">四川龙门山文化旅游发展有限公司</div>
<div class="c" style="left:728px;top:503px;height:25px;line-height:25px">项目业主联系电话</div>
<div class="c dg2" style="left:864px;top:503px;height:25px;line-height:25px">028-83885861</div>
<div class="c" style="left:95px;top:528px;height:26px;line-height:26px">招标人</div>
<div class="c" style="left:230px;top:528px;height:26px;line-height:26px">四川龙门山文化旅游发展有限公司</div>
<div class="c" style="left:728px;top:528px;height:26px;line-height:26px">招标人联系电话</div>
<div class="c dg2" style="left:864px;top:528px;height:26px;line-height:26px">028-83885861</div>
<div class="c" style="left:95px;top:554px;height:25px;line-height:25px">招标代理机构</div>
<div class="c" style="left:230px;top:554px;height:25px;line-height:25px">四川欧瑞建设集团有限公司</div>
<div class="c" style="left:728px;top:554px;height:25px;line-height:25px">招标代理机构联系电话</div>
<div class="c dg2" style="left:864px;top:554px;height:25px;line-height:25px">028-65227981</div>
<div class="c" style="left:95px;top:579px;height:25px;line-height:25px">开标地点</div>
<div class="c" style="left:230px;top:579px;height:25px;line-height:25px">彭州市分中心</div>
<div class="c" style="left:728px;top:579px;height:25px;line-height:25px">开标时间</div>
<div class="c dg2" style="left:864px;top:579px;height:25px;line-height:25px">20200221 - 10:00:00</div>
<div class="c" style="left:95px;top:604px;height:26px;line-height:26px">公示期</div>
<div class="c" style="letter-spacing:0.23px;left:230px;top:604px;height:26px;line-height:26px">2020年02月26日~2020年02月28日</div>
<div class="c" style="left:728px;top:604px;height:26px;line-height:26px">投标最高限价（元）</div>
<div class="c dg2" style="left:864px;top:604px;height:26px;line-height:26px">1310000</div>
<div class="c2" style="left:90px;width:84px;top:633.5px">中标候选人及<br>排序</div>
<div class="c" style="left:174px;width:674px;text-align:center;top:630px;height:40px;line-height:40px">中标候选人名称</div>
<div class="c" style="left:848px;width:118px;text-align:center;top:630px;height:40px;line-height:40px">投标报价（元）</div>
<div class="c2" style="left:966px;width:119px;top:633.5px">经评审的投标价<br>（元）</div>
<div class="c" style="left:1084px;width:85px;text-align:center;top:630px;height:40px;line-height:40px">综合评标得分</div>
<div class="c" style="left:90px;width:84px;text-align:center;top:670px;height:26px;line-height:26px">第一名</div>
<div class="c" style="left:179px;top:670px;height:26px;line-height:26px">四川同创建设工程管理有限公司</div>
<div class="c" style="letter-spacing:0.12px;left:853px;top:670px;height:26px;line-height:26px">1280000.00</div>
<div class="c" style="letter-spacing:0.12px;left:971px;top:670px;height:26px;line-height:26px">1280000.00</div>
<div class="c" style="letter-spacing:0.12px;left:1090px;top:670px;height:26px;line-height:26px">91.78</div>
<div class="c" style="left:90px;width:84px;text-align:center;top:696px;height:25px;line-height:25px">第二名</div>
<div class="c" style="left:179px;top:696px;height:25px;line-height:25px">四川兢业工程项目管理有限公司</div>
<div class="c" style="letter-spacing:0.12px;left:853px;top:696px;height:25px;line-height:25px">1285000.00</div>
<div class="c" style="letter-spacing:0.12px;left:971px;top:696px;height:25px;line-height:25px">1285000.00</div>
<div class="c" style="letter-spacing:0.12px;left:1090px;top:696px;height:25px;line-height:25px">90.52</div>
<div class="c" style="left:90px;width:84px;text-align:center;top:721px;height:25px;line-height:25px">第三名</div>
<div class="c" style="left:179px;top:721px;height:25px;line-height:25px">四川省蜀典工程监理有限责任公司</div>
<div class="c" style="letter-spacing:0.12px;left:853px;top:721px;height:25px;line-height:25px">1215025.00</div>
<div class="c" style="letter-spacing:0.12px;left:971px;top:721px;height:25px;line-height:25px">1215025.00</div>
<div class="c" style="letter-spacing:0.12px;left:1090px;top:721px;height:25px;line-height:25px">88.78</div>
<div class="c" style="left:95px;top:746px;height:26px;line-height:26px">第一中标候选人项目管理机构主要人员</div>
<!--/TABLE-->
</body></html>
